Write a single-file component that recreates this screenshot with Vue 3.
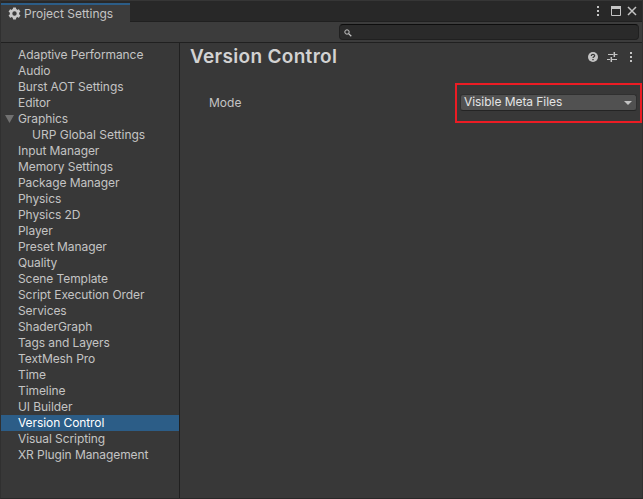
<script setup>
const items = [
  'Adaptive Performance', 'Audio', 'Burst AOT Settings', 'Editor', 'Graphics',
  'URP Global Settings', 'Input Manager', 'Memory Settings', 'Package Manager',
  'Physics', 'Physics 2D', 'Player', 'Preset Manager', 'Quality', 'Scene Template',
  'Script Execution Order', 'Services', 'ShaderGraph', 'Tags and Layers',
  'TextMesh Pro', 'Time', 'Timeline', 'UI Builder', 'Version Control',
  'Visual Scripting', 'XR Plugin Management',
]
const teeth = [0, 60, 120, 180, 240, 300]
</script>

<template>
  <div class="window">
    <span class="edge edge-top"></span>
    <span class="edge edge-light"></span>
    <span class="edge edge-dark"></span>
    <header class="titlebar">
      <div class="tab">
        <svg class="gear" width="13" height="13" viewBox="0 0 13 13">
          <rect v-for="a in teeth" :key="a" x="4.9" y="0.5" width="3.2" height="3" rx="0.4" fill="#c8c8c8" :transform="`rotate(${a} 6.5 6.5)`" />
          <circle cx="6.5" cy="6.5" r="3.45" fill="none" stroke="#c8c8c8" stroke-width="2.5" />
        </svg>
        <span class="title">Project Settings</span>
      </div>
      <div class="controls">
        <svg width="4" height="12" viewBox="0 0 4 12" fill="#c4c4c4">
          <rect x="1" y="1" width="2" height="2" /><rect x="1" y="5" width="2" height="2" /><rect x="1" y="9" width="2" height="2" />
        </svg>
        <svg class="maximize" width="10" height="10" viewBox="0 0 10 10">
          <path d="M.5 .5h9v9h-9z" fill="none" stroke="#c4c4c4" /><path d="M0 0h10v3H0z" fill="#c4c4c4" />
        </svg>
        <svg class="close" width="10" height="10" viewBox="0 0 10 10">
          <path d="M1 1l8 8M9 1l-8 8" stroke="#c4c4c4" stroke-width="1.5" />
        </svg>
      </div>
    </header>
    <div class="toolbar">
      <div class="search">
        <svg width="8" height="8" viewBox="0 0 8 8" fill="none" stroke="#c4c4c4">
          <circle cx="3" cy="3" r="2.2" stroke-width="1" /><path d="M4.6 4.6L7.3 7.3" stroke-width="1.3" />
        </svg>
      </div>
    </div>
    <main class="body">
      <nav class="sidebar">
        <div
          v-for="name in items" :key="name" class="item"
          :class="{ selected: name === 'Version Control', child: name === 'URP Global Settings' }"
        >
          <svg v-if="name === 'Graphics'" class="arrow" width="9" height="8" viewBox="0 0 9 8">
            <path d="M0 0h9L4.5 8z" fill="#717171" />
          </svg>
          <span>{{ name }}</span>
        </div>
      </nav>
      <section class="content">
        <div class="heading">
          <h1>Version Control</h1>
          <div class="actions">
            <svg width="10" height="10" viewBox="0 0 10 10">
              <circle cx="5" cy="5" r="5" fill="#c4c4c4" />
              <path d="M3.3 3.9C3.3 1.8 6.7 1.9 6.7 3.8C6.7 4.8 5 4.8 5 6.1" fill="none" stroke="#383838" stroke-width="1.2" />
              <path d="M4.3 7h1.4v1.3H4.3z" fill="#383838" />
            </svg>
            <svg class="sliders" width="11" height="10" viewBox="0 0 11 10" fill="none" stroke="#c4c4c4">
              <path d="M1 2.5h5.5M8 2.5h2.5M0 7.5h3M4.5 7.5h5.5" stroke-width="1.2" />
              <path d="M7.3 0v5M4.3 5v5" stroke-width="1.5" />
            </svg>
            <svg class="more" width="4" height="10" viewBox="0 0 4 10" fill="#c4c4c4">
              <rect x="1" width="2" height="2" /><rect x="1" y="4" width="2" height="2" /><rect x="1" y="8" width="2" height="2" />
            </svg>
          </div>
        </div>
        <div class="field">
          <label>Mode</label>
          <div class="highlight">
            <div class="dropdown">
              <span>Visible Meta Files</span>
              <svg class="caret" width="8" height="4" viewBox="0 0 8 4"><path d="M0 0h8L4 4z" fill="#c4c4c4" /></svg>
            </div>
          </div>
        </div>
      </section>
    </main>
  </div>
</template>

<style>
body { background: #383838; }
</style>

<style scoped>
.window {
  box-sizing: border-box;
  position: relative;
  width: 643px;
  height: 499px;
  display: flex;
  flex-direction: column;
  padding-top: 1px;
  border-left: 1px solid #303030;
  border-right: 1px solid #303030;
  border-bottom: 1px solid #292929;
  background: #383838;
  color: #c4c4c4;
  font: 12px/16px Inter, "Liberation Sans", sans-serif;
  letter-spacing: -0.08px;
  overflow: hidden;
}
.window * { box-sizing: border-box; }
.edge { position: absolute; }
.edge-top { left: 0; top: 0; width: 641px; height: 1px; background: #363636; }
.edge-light { left: -1px; top: 321px; width: 1px; height: 10px; background: #555; }
.edge-dark { left: -1px; top: 332px; width: 1px; height: 24px; background: #202020; }
.titlebar {
  height: 21px;
  flex: none;
  display: flex;
  justify-content: space-between;
  background: #282828;
  border-bottom: 1px solid #202020;
}
.tab {
  width: 129px;
  height: 20px;
  margin: 2px 0 -1px;
  display: flex;
  align-items: flex-start;
  gap: 3px;
  padding: 1px 0 0 7px;
  border-top: 2px solid #2c5d87;
  background: #3c3c3c;
  white-space: nowrap;
}
.title { letter-spacing: 0; }
.gear { flex: none; margin-top: 1px; }
.controls { display: flex; align-items: flex-start; padding: 4px 5px 0 0; }
.maximize { margin: 1px 6px 0 11px; }
.close { margin-top: 1px; }
.toolbar {
  height: 21px;
  flex: none;
  display: flex;
  justify-content: flex-end;
  padding: 2px 3px 0 0;
  background: #3c3c3c;
  border-bottom: 1px solid #202020;
}
.search {
  width: 300px;
  height: 16px;
  padding: 4px 0 0 4px;
  border: 1px solid #202020;
  border-top-color: #0d0d0d;
  border-radius: 4px;
  background: #2a2a2a;
}
.search svg { display: block; }
.body { flex: 1; display: flex; min-height: 0; }
.sidebar { width: 179px; flex: none; padding-top: 4px; border-right: 1px solid #202020; }
.item { display: flex; align-items: center; height: 16px; padding-left: 17px; white-space: nowrap; }
.child { padding-left: 31px; letter-spacing: 0; }
.selected { background: #2c5d87; color: #fff; }
.arrow { flex: none; margin: 0 4px 0 -13px; }
.content { flex: 1; min-width: 0; }
.heading { height: 40px; display: flex; justify-content: space-between; align-items: flex-start; padding: 2px 9px 0 10px; }
h1 { margin: 0; font-size: 19px; line-height: 24px; font-weight: 600; letter-spacing: 0.32px; color: #d2d2d2; }
.actions { display: flex; align-items: center; padding-top: 7px; }
.sliders { margin-left: 9px; }
.more { margin-left: 11px; }
.field { display: flex; justify-content: space-between; padding-left: 29px; }
label { padding-top: 12px; letter-spacing: 0; }
.highlight { width: 187px; height: 40px; padding: 9px 3px 0 3px; border: 2px solid #ec1c24; }
.dropdown {
  height: 17px;
  display: flex;
  align-items: center;
  justify-content: space-between;
  padding: 0 4px 2px 3px;
  border: 1px solid #303030;
  border-bottom-color: #242424;
  border-radius: 3px;
  background: #515151;
  color: #e4e4e4;
  letter-spacing: -0.05px;
}
.caret { margin-top: 2px; }
</style>
